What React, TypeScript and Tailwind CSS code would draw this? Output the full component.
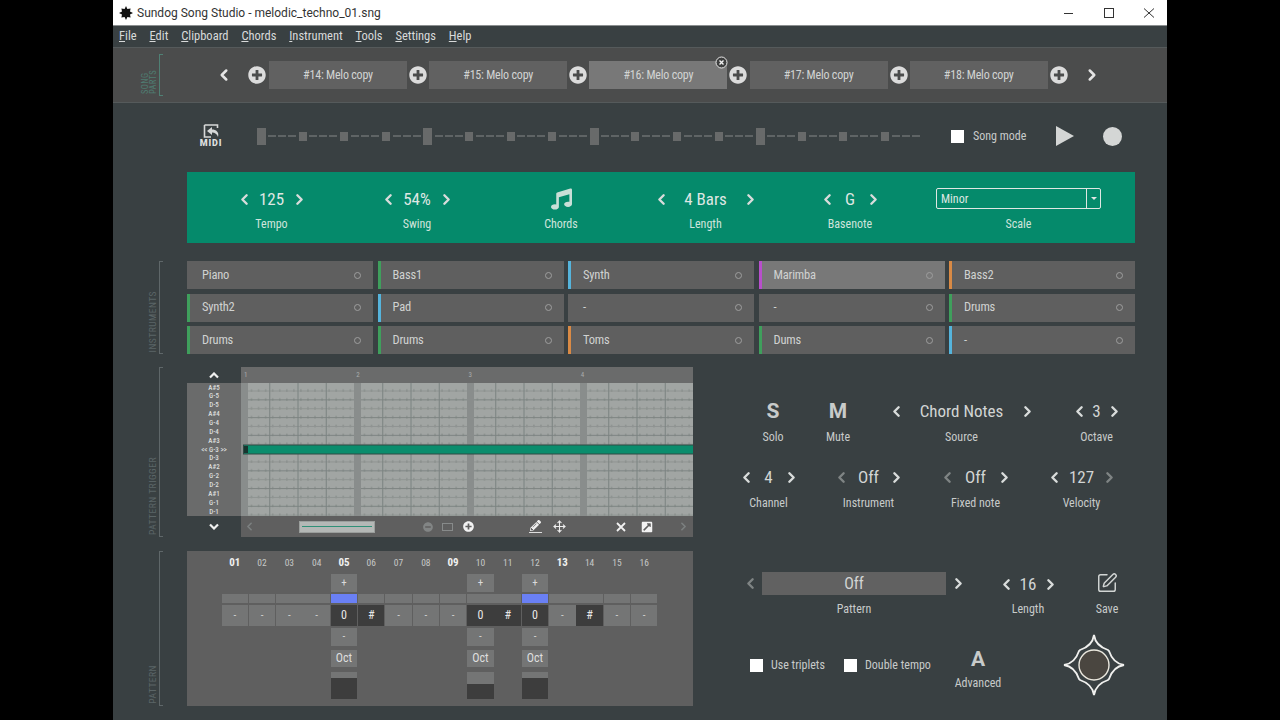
import { ChevronLeft, ChevronRight, Move, SquarePen } from 'lucide-react';
import { FaExternalLinkSquareAlt, FaMinusCircle, FaMusic, FaPencilAlt, FaPlusCircle } from 'react-icons/fa';

const MENU = ['File', 'Edit', 'Clipboard', 'Chords', 'Instrument', 'Tools', 'Settings', 'Help'];
const PARTS = [14, 15, 16, 17, 18];

const INSTRUMENTS = [
  ['Piano', 'border-l-[#5f5f5f]'],
  ['Bass1', 'border-l-[#3f9f5c]'],
  ['Synth', 'border-l-[#55b4dc]'],
  ['Marimba', 'border-l-[#b84fcc]'],
  ['Bass2', 'border-l-[#d98a45]'],
  ['Synth2', 'border-l-[#3f9f5c]'],
  ['Pad', 'border-l-[#55b4dc]'],
  ['-', 'border-l-[#5f5f5f]'],
  ['-', 'border-l-[#5f5f5f]'],
  ['Drums', 'border-l-[#3f9f5c]'],
  ['Drums', 'border-l-[#3f9f5c]'],
  ['Drums', 'border-l-[#3f9f5c]'],
  ['Toms', 'border-l-[#d98a45]'],
  ['Dums', 'border-l-[#3f9f5c]'],
  ['-', 'border-l-[#55b4dc]'],
];

const NOTES = ['A#5', 'G-5', 'D-5', 'A#4', 'G-4', 'D-4', 'A#3', '<< G-3 >>', 'D-3', 'A#2', 'G-2', 'D-2', 'A#1', 'G-1', 'D-1'];

// step values for the bottom pattern grid
const STEPS = ['-', '-', '-', '-', '0', '#', '-', '-', '-', '0', '#', '0', '-', '#', '-', '-'];
const BOLD_STEPS = [0, 4, 8, 12];
const OPEN_STEPS = [4, 9, 11];

function Chev({ dir, dim, size = 17 }: { dir: 'l' | 'r'; dim?: boolean; size?: number }) {
  const Icon = dir === 'l' ? ChevronLeft : ChevronRight;
  return <Icon size={size} strokeWidth={3.4} className={dim ? 'shrink-0 text-[#7f8484]' : 'shrink-0 text-[#d9dcdb]'} />;
}

function Caption({ children, className = '' }: { children: React.ReactNode; className?: string }) {
  return <div className={`text-center text-[12px] leading-[14px] text-[#c8cbca] ${className}`}>{children}</div>;
}

function Stepper({ value, width, green, dimL, dimR }: { value: string; width: string; green?: boolean; dimL?: boolean; dimR?: boolean }) {
  return (
    <div className="flex h-[22px] items-center justify-center">
      <Chev dir="l" dim={dimL} />
      <span className={`whitespace-nowrap text-center text-[17px] leading-[22px] ${width} ${green ? 'text-[#dfe7e3]' : 'text-[#d2d5d4]'}`}>{value}</span>
      <Chev dir="r" dim={dimR} />
    </div>
  );
}

function SideLabel({ text, height, teal }: { text: string; height: string; teal?: boolean }) {
  return (
    <div className={`flex w-[74px] shrink-0 ${height}`}>
      <div className="flex w-[45px] items-end justify-end pb-[2px] pr-[1px]">
        <span className={`whitespace-pre-line text-left leading-[8px] [writing-mode:vertical-rl] rotate-180 ${teal ? 'text-[8.5px] tracking-[0.4px] text-[#4f7d72]' : 'text-[9.5px] tracking-[0.5px] text-[#5b6567]'}`}>
          {text}
        </span>
      </div>
      <div className={`ml-[1px] w-[4px] border-y border-l ${teal ? 'border-[#4f8074]' : 'border-[#5f6769]'}`} />
    </div>
  );
}

function PianoGrid() {
  return (
    <svg width="452" height="133" className="block">
      <defs>
        <pattern id="ticks" width="7.06" height="8.87" patternUnits="userSpaceOnUse" x="7">
          <line x1="3.5" y1="6.4" x2="3.5" y2="8.87" stroke="#7b817e" strokeWidth="1" />
        </pattern>
      </defs>
      <rect width="452" height="133" fill="#a1a5a3" />
      <rect width="452" height="133" fill="url(#ticks)" />
      {Array.from({ length: 15 }, (_, i) => (
        <line key={i} x1="0" x2="452" y1={i * 8.87 + 8} y2={i * 8.87 + 8} stroke={i % 2 ? '#7e8583' : '#8f9492'} strokeWidth="1" />
      ))}
      {Array.from({ length: 16 }, (_, i) => (
        <line key={i} x1={i * 28.25 + 0.5} x2={i * 28.25 + 0.5} y1="0" y2="133" stroke="#7b8381" strokeWidth="1" />
      ))}
      {[0, 113, 226, 339].map((x) => (
        <rect key={x} x={x} width="7" height="133" fill="#898d8c" />
      ))}
      <rect x="2" y="61.5" width="450" height="10" fill="#2e4a44" />
      <rect x="3" y="62.5" width="449" height="8" fill="#0a8d6d" />
      <rect x="3" y="63" width="4" height="7" fill="#17352f" />
    </svg>
  );
}

function Roll() {
  return (
    <div className="flex h-[170px] w-[506px]">
      <div className="flex w-[54px] flex-col">
        <div className="flex h-[16px] items-center justify-center">
          <svg width="10" height="7" viewBox="0 0 10 7"><path d="M1 5.5 5 1.5 9 5.5" fill="none" stroke="#f0f0f0" strokeWidth="2.2" /></svg>
        </div>
        <div className="flex h-[133px] flex-col bg-[#6a6b6b] pt-[0.5px]">
          {NOTES.map((n) => (
            <div key={n} className="h-[8.87px] text-center text-[7px] font-medium leading-[8.87px] text-[#dcdedd]">{n}</div>
          ))}
        </div>
        <div className="flex h-[21px] items-center justify-center pb-[1px]">
          <svg width="10" height="7" viewBox="0 0 10 7"><path d="M1 1.5 5 5.5 9 1.5" fill="none" stroke="#f0f0f0" strokeWidth="2.2" /></svg>
        </div>
      </div>
      <div className="flex w-[452px] flex-col">
        <div className="flex h-[16px] items-center bg-[#6a6b6b] pl-[3px] text-[7px] text-[#a9acab]">
          {['1', '2', '3', '4'].map((b) => <span key={b} className="w-[113px]">{b}</span>)}
        </div>
        <PianoGrid />
        <div className="flex h-[21px] items-center bg-[#5f5f5f] pl-[2px]">
          <ChevronLeft size={13} strokeWidth={3} className="text-[#7c8080]" />
          <div className="ml-[43px] flex h-[12px] w-[76px] items-center border border-[#9a9e9c] bg-[#b4b8b6] px-[2px]">
            <div className="h-[1px] w-full bg-[#2f9077]" />
          </div>
          <FaMinusCircle size={10} className="ml-[48px] text-[#828585]" />
          <div className="ml-[9px] h-[8px] w-[11px] border border-[#878a8a]" />
          <FaPlusCircle size={11} className="ml-[10px] text-[#f2f2f2]" />
          <div className="ml-[55px] flex flex-col items-center border-b border-[#dedede] px-[1px]">
            <FaPencilAlt size={11} className="mb-[1px] text-[#f0f0f0]" />
          </div>
          <Move size={13} strokeWidth={2} className="ml-[11px] text-[#eeeeee]" />
          <svg width="10" height="10" viewBox="0 0 10 10" className="ml-[50px]"><path d="M1 1 9 9M9 1 1 9" stroke="#f2f2f2" strokeWidth="1.8" /></svg>
          <FaExternalLinkSquareAlt size={12} className="ml-[15px] text-[#f2f2f2]" />
          <ChevronRight size={13} strokeWidth={3} className="ml-[24px] text-[#7c8080]" />
        </div>
      </div>
    </div>
  );
}

function PatternSteps() {
  const cell = 'h-[18px] bg-[#747575] text-center text-[11px] leading-[18px] text-[#dadada]';
  return (
    <div className="h-[155px] w-[506px] bg-[#5f5f5f] pl-[34.5px]">
      <div className="grid w-[437px] grid-cols-[repeat(16,26.5px)] gap-x-[0.8px] pt-[5px]">
        {STEPS.map((_, i) => (
          <div key={i} className={`h-[18px] text-center leading-[14px] ${BOLD_STEPS.includes(i) ? 'text-[11px] font-bold text-[#f0f0f0]' : 'text-[9.5px] text-[#c6c8c7]'}`}>
            {String(i + 1).padStart(2, '0')}
          </div>
        ))}
        {STEPS.map((_, i) => (
          <div key={i} className="h-[20px]">{OPEN_STEPS.includes(i) && <div className={cell}>+</div>}</div>
        ))}
        {STEPS.map((_, i) => (
          <div key={i} className={`h-[9px] ${i === 4 || i === 11 ? 'bg-[#6a80f5]' : 'bg-[#747575]'}`} />
        ))}
        {STEPS.map((s, i) => (
          <div
            key={i}
            className={`mt-[2px] h-[21px] text-center leading-[21px] ${s === '-' ? 'bg-[#747575] text-[11px] text-[#d5d5d5]' : 'bg-[#3d3d3d] text-[12px] text-[#e8e8e8]'}`}
          >
            {s}
          </div>
        ))}
        {STEPS.map((_, i) => (
          <div key={i} className="mt-[2px] h-[18px]">{OPEN_STEPS.includes(i) && <div className={cell}>-</div>}</div>
        ))}
        {STEPS.map((_, i) => (
          <div key={i} className="mt-[4px] h-[17px]">
            {OPEN_STEPS.includes(i) && <div className="h-[17px] bg-[#747575] text-center text-[12px] leading-[17px] text-[#dedede]">Oct</div>}
          </div>
        ))}
        {STEPS.map((_, i) => (
          <div key={i} className="mt-[5px] h-[27px]">
            {OPEN_STEPS.includes(i) && (
              <div className="flex h-[27px] flex-col bg-[#747575]">
                <div className={`mt-auto bg-[#3d3d3d] ${i === 9 ? 'h-[15px]' : 'h-[21px]'}`} />
              </div>
            )}
          </div>
        ))}
      </div>
    </div>
  );
}

function Checkbox({ label, width, className = '' }: { label: string; width: string; className?: string }) {
  return (
    <div className={`flex h-[18px] items-center gap-[8px] ${className}`}>
      <div className="size-[13px] bg-white" />
      <span className={`whitespace-nowrap text-[12px] text-[#c8cbca] ${width}`}>{label}</span>
    </div>
  );
}

export default function App() {
  return (
    <div className="flex h-[720px] w-[1280px] justify-center overflow-hidden bg-black font-['Roboto',sans-serif] [font-stretch:80%]">
      <div className="h-[720px] w-[1054px] bg-[#394042]">
        {/* title bar */}
        <div className="flex h-[26px] items-center border-b border-[#8b8f90] bg-white pl-[6px] pr-[11px]">
          <svg width="14" height="14" viewBox="0 0 14 14"><path d="M7 0 8.4 3 11.6 2.4 11 5.6 14 7 11 8.4 11.6 11.6 8.4 11 7 14 5.6 11 2.4 11.6 3 8.4 0 7 3 5.6 2.4 2.4 5.6 3Z" fill="#111" /></svg>
          <span className="ml-[4px] text-[12px] text-[#333] [font-stretch:88%]">Sundog Song Studio - melodic_techno_01.sng</span>
          <svg width="92" height="12" viewBox="0 0 92 12" className="ml-auto">
            <path d="M0 6.5H9" stroke="#333" />
            <rect x="40.5" y="1.5" width="9" height="9" fill="none" stroke="#333" />
            <path d="M80 1.5 90 10.5M90 1.5 80 10.5" stroke="#333" />
          </svg>
        </div>

        {/* menu */}
        <div className="flex h-[21px] items-center gap-[12.85px] pb-[1px] pl-[6px] text-[12.5px] text-[#d8dada]">
          {MENU.map((m) => (
            <span key={m}><span className="underline">{m[0]}</span>{m.slice(1)}</span>
          ))}
        </div>

        {/* song parts */}
        <div className="flex h-[56px] items-center border-y border-[#555a5b] bg-[#4b4c4c]">
          <SideLabel text={'SONG\nPARTS'} height="h-[42px]" teal />
          <ChevronLeft size={18} strokeWidth={3.4} className="ml-[28px] text-[#e4e4e4]" />
          <div className="ml-[15px] flex items-center">
            {PARTS.map((p, i) => (
              <div key={p} className="flex items-center">
                <FaPlusCircle size={18} className={`text-[#dcdcdc] ${i === 0 ? 'mr-[3px]' : 'mx-[2.1px]'}`} />
                <div className={`relative flex h-[28px] w-[138px] items-center justify-center text-[12px] tracking-[-0.2px] text-[#d2d4d3] [font-stretch:75%] ${p === 16 ? 'bg-[#787878]' : 'bg-[#616161]'}`}>
                  #{p}: Melo copy
                  {p === 16 && (
                    <svg width="13" height="13" viewBox="0 0 13 13" className="absolute -right-[0.5px] -top-[5px]">
                      <circle cx="6.5" cy="6.5" r="5.5" fill="#3e3f3f" stroke="#e8e8e8" />
                      <path d="M4.5 4.5 8.5 8.5M8.5 4.5 4.5 8.5" stroke="#f2f2f2" strokeWidth="1.4" />
                    </svg>
                  )}
                </div>
              </div>
            ))}
            <FaPlusCircle size={18} className="mx-[2.1px] text-[#dcdcdc]" />
          </div>
          <ChevronRight size={18} strokeWidth={3.4} className="ml-[13px] text-[#e4e4e4]" />
        </div>

        {/* transport */}
        <div className="flex h-[69px] items-center pb-[3px] pl-[86px]">
          <div className="flex w-[24px] flex-col items-center">
            <svg width="18" height="15" viewBox="0 0 18 15">
              <path d="M2.5 1H15.5V4M2.5 1V13H9" fill="none" stroke="#d6d8d8" strokeWidth="1.6" />
              <path d="M10 3 5 7 10 11V8.5C13 8.5 15 10 16 13 17.5 8 14 5.5 10 5.5Z" fill="#d6d8d8" />
            </svg>
            <span className="text-[9px] font-black leading-[9px] tracking-[0.8px] text-[#dcdede] [font-stretch:100%]">MIDI</span>
          </div>
          <div className="ml-[34px] flex w-[666px] items-center">
            {Array.from({ length: 16 }, (_, i) => (
              <div key={i} className="flex w-[41.6px] shrink-0 items-center">
                <div className={i % 4 === 0 ? 'h-[17px] w-[9px] bg-[#686a6a]' : 'h-[9px] w-[8px] bg-[#686a6a]'} />
                <div className="mx-auto flex gap-[2px] px-[1px]">
                  <div className="h-[2px] w-[8px] bg-[#5f6465]" />
                  <div className="h-[2px] w-[8px] bg-[#5f6465]" />
                  <div className="h-[2px] w-[8px] bg-[#5f6465]" />
                </div>
              </div>
            ))}
          </div>
          <div className="ml-[28px] size-[13px] bg-white" />
          <span className="ml-[9px] w-[53px] whitespace-nowrap text-[12px] text-[#c8cbca]">Song mode</span>
          <svg width="18" height="20" viewBox="0 0 18 20" className="ml-[30px]"><path d="M0 0 18 10 0 20Z" fill="#d4d6d5" /></svg>
          <div className="ml-[29px] size-[19px] rounded-full bg-[#d4d6d5]" />
        </div>

        <div className="pl-[74px]">
          {/* green header */}
          <div className="flex h-[71px] w-[948px] bg-[#058a6b] pt-[16px]">
            <div className="ml-[24.5px] w-[120px]">
              <Stepper value="125" width="w-[38px]" green />
              <Caption className="mt-[7px] text-[#cfe4dc]">Tempo</Caption>
            </div>
            <div className="ml-[25.5px] w-[120px]">
              <Stepper value="54%" width="w-[41px]" green />
              <Caption className="mt-[7px] text-[#cfe4dc]">Swing</Caption>
            </div>
            <div className="ml-[23px] flex w-[122px] flex-col items-center">
              <FaMusic size={21} className="h-[22px] text-[#c9dfd7]" />
              <Caption className="mt-[7px] text-[#cfe4dc]">Chords</Caption>
            </div>
            <div className="ml-[22.5px] w-[122px]">
              <Stepper value="4 Bars" width="w-[72px]" green />
              <Caption className="mt-[7px] text-[#cfe4dc]">Length</Caption>
            </div>
            <div className="ml-[22.5px] w-[122px]">
              <Stepper value="G" width="w-[29px]" green />
              <Caption className="mt-[7px] text-[#cfe4dc]">Basenote</Caption>
            </div>
            <div className="ml-[25px] w-[165px]">
              <div className="flex h-[21px] items-center rounded-[2px] border border-[#dfe7e3] pl-[4px] text-[12px] text-[#dfe7e3]">
                Minor
                <div className="ml-auto flex h-full w-[14px] items-center justify-center border-l border-[#dfe7e3]">
                  <div className="h-0 w-0 border-x-[3px] border-t-[3px] border-x-transparent border-t-[#e4e6e5]" />
                </div>
              </div>
              <Caption className="mt-[8px] text-[#cfe4dc]">Scale</Caption>
            </div>
          </div>
        </div>

        {/* instruments */}
        <div className="mt-[18px] flex">
          <SideLabel text="INSTRUMENTS" height="h-[93px]" />
          <div className="grid h-[93px] w-[948px] grid-cols-5 grid-rows-3 gap-x-[4.5px] gap-y-[4.5px]">
            {INSTRUMENTS.map(([name, color], i) => (
              <div
                key={i}
                className={`flex items-center justify-between border-l-[3px] px-[12px] text-[12.5px] tracking-[-0.2px] text-[#d0d2d1] ${color} ${name === 'Marimba' ? 'bg-[#787878]' : 'bg-[#5f5f5f]'}`}
              >
                {name}
                <div className="size-[7px] rounded-full border border-[#9e9e9e]" />
              </div>
            ))}
          </div>
        </div>

        {/* piano roll + track settings */}
        <div className="mt-[13px] flex">
          <SideLabel text="PATTERN TRIGGER" height="h-[170px]" />
          <Roll />
          <div className="w-[442px] pt-[33px]">
            <div className="flex">
              <div className="ml-[50px] w-[60px] text-center">
                <div className="text-[21px] font-bold leading-[22px] text-[#c8cbca] [font-stretch:100%]">S</div>
                <Caption className="mt-[8px]">Solo</Caption>
              </div>
              <div className="ml-[5px] w-[60px] text-center">
                <div className="text-[21px] font-bold leading-[22px] text-[#c8cbca] [font-stretch:100%]">M</div>
                <Caption className="mt-[8px]">Mute</Caption>
              </div>
              <div className="ml-[18.5px] w-[150px]">
                <Stepper value="Chord Notes" width="w-[114px]" />
                <Caption className="mt-[8px]">Source</Caption>
              </div>
              <div className="ml-[29px] w-[62px]">
                <Stepper value="3" width="w-[18px]" />
                <Caption className="mt-[8px]">Octave</Caption>
              </div>
            </div>
            <div className="mt-[22px] flex">
              <div className="ml-[30.5px] w-[90px]">
                <Stepper value="4" width="w-[28px]" />
                <Caption className="mt-[8px]">Channel</Caption>
              </div>
              <div className="ml-[10px] w-[90px]">
                <Stepper value="Off" width="w-[38px]" dimL />
                <Caption className="mt-[8px]">Instrument</Caption>
              </div>
              <div className="ml-[17px] w-[90px]">
                <Stepper value="Off" width="w-[40px]" dimL />
                <Caption className="mt-[8px]">Fixed note</Caption>
              </div>
              <div className="ml-[16px] w-[90px]">
                <Stepper value="127" width="w-[38px]" dimR />
                <Caption className="mt-[8px]">Velocity</Caption>
              </div>
            </div>
          </div>
        </div>

        {/* pattern + settings */}
        <div className="mt-[14px] flex">
          <SideLabel text="PATTERN" height="h-[155px]" />
          <PatternSteps />
          <div className="w-[442px] pt-[21px]">
            <div className="flex">
              <div className="ml-[48.5px] w-[225px]">
                <div className="flex items-center justify-between">
                  <Chev dir="l" dim />
                  <div className="h-[23px] w-[184px] bg-[#616161] text-center text-[16px] leading-[23px] text-[#d2d5d4]">Off</div>
                  <Chev dir="r" />
                </div>
                <Caption className="mt-[7px]">Pattern</Caption>
              </div>
              <div className="ml-[26.5px] w-[70px] pt-[1px]">
                <Stepper value="16" width="w-[27px]" />
                <Caption className="mt-[7px]">Length</Caption>
              </div>
              <div className="ml-[19px] flex w-[50px] flex-col items-center">
                <SquarePen size={22} strokeWidth={1.6} className="text-[#d2d5d4]" />
                <Caption className="mt-[8px]">Save</Caption>
              </div>
            </div>
            <div className="mt-[13px] flex items-start">
              <Checkbox label="Use triplets" width="w-[54px]" className="ml-[57px] mt-[27px]" />
              <Checkbox label="Double tempo" width="w-[66px]" className="ml-[19px] mt-[27px]" />
              <div className="ml-[22px] mt-[18px] w-[50px] text-center">
                <div className="text-[21px] font-bold leading-[24px] text-[#c8cbca] [font-stretch:100%]">A</div>
                <Caption className="mt-[5px]">Advanced</Caption>
              </div>
              <svg width="62" height="62" viewBox="0 0 62 62" className="ml-[60px] mt-[5px]">
                <path d="M31 1C32 8 36 13 45 16L46 17C49 26 54 30 61 31 54 32 49 36 46 45L45 46C36 49 32 54 31 61 30 54 26 49 17 46L16 45C13 36 8 32 1 31 8 30 13 26 16 17L17 16C26 13 30 8 31 1Z" fill="none" stroke="#f0f0ee" strokeWidth="1.8" />
                <circle cx="31" cy="31" r="15" fill="#4a4640" stroke="#ece9df" strokeWidth="1.4" />
              </svg>
            </div>
          </div>
        </div>
      </div>
    </div>
  );
}
